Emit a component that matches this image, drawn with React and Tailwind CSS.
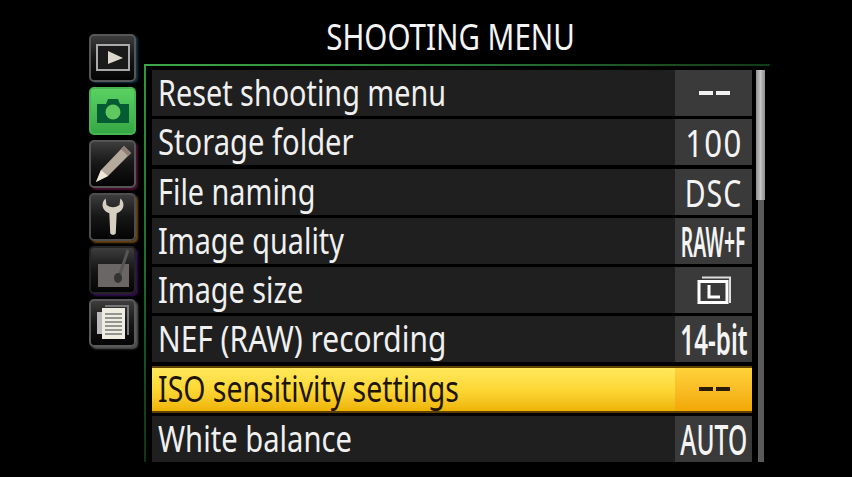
const F = { fontFamily: '"Noto Sans", "Open Sans", sans-serif' };

const rows = [
  ["Reset shooting menu", "--", false, "scale-x-[0.8]"],
  ["Storage folder", "100", false, "scale-x-[0.81]"],
  ["File naming", "DSC", false, "scale-x-[0.8]"],
  ["Image quality", "RAW+F", false, "scale-x-[0.8]"],
  ["Image size", "L", false, "scale-x-[0.8]"],
  ["NEF (RAW) recording", "14-bit", false, "scale-x-[0.83]"],
  ["ISO sensitivity settings", "--", true, "scale-x-[0.79]"],
  ["White balance", "AUTO", false, "scale-x-[0.81]"],
];

const valueClass = {
  "100": "text-[38px] scale-x-[0.82] tracking-[1.5px]",
  DSC: "text-[38px] scale-x-[0.75] tracking-[1.5px]",
  "RAW+F": "text-[42px] scale-x-[0.46] font-semibold",
  "14-bit": "text-[41px] scale-x-[0.59] font-semibold",
  AUTO: "text-[41px] scale-x-[0.6] font-medium",
};

function Value({ v, sel }) {
  if (v === "L")
    return (
      <svg width="36" height="30" viewBox="0 0 36 30">
        <path d="M6 2.5H34V28" fill="none" stroke="#ddd" strokeWidth="2" />
        <rect x="3" y="6.5" width="28" height="21" fill="#3a3a3a" stroke="#fff" strokeWidth="3" />
        <path d="M13 10V22H24" fill="none" stroke="#fff" strokeWidth="3" />
      </svg>
    );
  if (v === "--")
    return (
      <div className="flex gap-[3px] pl-[1px]">
        <div className={`h-[4px] w-[14px] ${sel ? "bg-[#2a1a00]" : "bg-[#f2f2f2]"}`} />
        <div className={`h-[4px] w-[14px] ${sel ? "bg-[#2a1a00]" : "bg-[#f2f2f2]"}`} />
      </div>
    );
  return (
    <span
      className={`block shrink-0 whitespace-nowrap text-center leading-none text-[#f4f4f4] ${valueClass[v]}`}
      style={F}
    >
      {v}
    </span>
  );
}

function Row({ label, value, sel, sx }) {
  return (
    <div className={`flex shrink-0 ${sel ? "h-[47px] border-y-2 border-[#5e4100] bg-gradient-to-b from-[#ffe85a] via-[#fdd835] to-[#eeb400]" : "h-[46px] bg-[#1f1f1f]"}`}>
      <div className="flex min-w-0 flex-1 items-center pl-[6px]">
        <span
          className={`origin-left whitespace-nowrap text-[36px] leading-none ${sx} ${sel ? "text-[#1d1400]" : "text-[#f0f0f0]"}`}
          style={F}
        >
          {label}
        </span>
      </div>
      <div className={`flex w-[77px] shrink-0 items-center justify-center ${sel ? "bg-gradient-to-b from-[#ffd23a] to-[#f2a800]" : "bg-[#3a3a3a]"}`}>
        <Value v={value} sel={sel} />
      </div>
    </div>
  );
}

function Tab({ children, cls, glow, active }) {
  return (
    <div
      className={`flex h-[48px] w-[47px] shrink-0 items-center justify-center rounded-[5px] border-2 ${active ? "border-[#46b552] bg-gradient-to-b from-[#5bd162] to-[#35a845]" : `${cls} bg-gradient-to-b from-[#3d3d3d] via-[#161616] to-[#050505]`}`}
      style={glow}
    >
      {children}
    </div>
  );
}

export default function App() {
  return (
    <div className="flex h-[477px] w-[852px] overflow-hidden bg-black" style={F}>
      <div className="flex w-[144px] shrink-0 flex-col gap-[5px] pl-[89px] pt-[34px]">
        <Tab cls="border-[#565656]" glow={{ boxShadow: "2px 1px 2px #12324a" }}>
          <svg width="36" height="30" viewBox="0 0 36 30">
            <rect x="2" y="2" width="32" height="25" fill="#1a1a1a" stroke="#aaa" strokeWidth="2" />
            <path d="M13 8L28 15L13 21Z" fill="#ddd8cc" />
          </svg>
        </Tab>
        <Tab active>
          <svg width="36" height="28" viewBox="0 0 36 28">
            <path d="M2 7H11L13 2H23L25 7H34V26H2Z" fill="#065c32" />
            <circle cx="18" cy="15" r="7.5" fill="#5fc85f" />
          </svg>
        </Tab>
        <Tab cls="border-[#555]" glow={{ boxShadow: "2px 2px 2px #4a1030" }}>
          <svg width="38" height="40" viewBox="0 0 38 40">
            <path d="M30 2L37 9L14 32L2 38L7 26Z" fill="#b5a99c" />
            <path d="M7 26L14 32L2 38Z" fill="#eee7da" />
            <path d="M30 2L37 9L34 12L27 5Z" fill="#8c8076" />
          </svg>
        </Tab>
        <Tab cls="border-[#4d4d4d]" glow={{ boxShadow: "2px 2px 2px #6b4512" }}>
          <svg width="24" height="42" viewBox="0 0 26 42">
            <path d="M5 1C0 5 0 14 9 17L10 39Q13 42 16 39L17 17C26 14 26 5 21 1L20 8Q13 13 6 8Z" fill="#d6d0c2" />
          </svg>
        </Tab>
        <Tab cls="border-[#242424]" glow={{ boxShadow: "2px 2px 2px #331050" }}>
          <svg width="36" height="42" viewBox="0 0 36 42">
            <rect x="3" y="15" width="31" height="23" fill="#6a6666" />
            <path d="M33 1L24 28" stroke="#555" strokeWidth="3" />
            <ellipse cx="23" cy="29" rx="4" ry="5" fill="#333" />
          </svg>
        </Tab>
        <Tab cls="border-[#5a5a5a]" glow={{ boxShadow: "2px 2px 2px #555" }}>
          <svg width="36" height="38" viewBox="0 0 36 38">
            <path d="M10 2H33V31" fill="none" stroke="#777" strokeWidth="2" />
            <path d="M2 8H8V30H2Z" fill="#bbb" />
            <rect x="7" y="4" width="23" height="31" fill="#efece2" />
            <path d="M10 10H27M10 14H27M10 18H27M10 22H27M10 26H27M10 30H27" stroke="#777" strokeWidth="1.5" />
          </svg>
        </Tab>
      </div>
      <div className="flex w-[626px] shrink-0 flex-col">
        <div className="flex h-[64px] shrink-0 items-center justify-center pr-[12px] pt-[10px] leading-none text-[#f4f4f4]">
          <span className="block shrink-0 scale-x-[0.82] whitespace-nowrap text-[36px] leading-none">SHOOTING MENU</span>
        </div>
        <div className="flex h-[397px] shrink-0 flex-col">
          <div className="h-[2px] shrink-0 bg-gradient-to-r from-[#3fa648] via-[#2c7a35] to-[#123a18]" />
          <div className="flex flex-1">
            <div className="w-[2px] shrink-0 bg-gradient-to-b from-[#2f9a3d] via-[#1f6b2a] to-[#0d3315]" />
            <div className="ml-[6px] mt-[4px] flex w-[600px] shrink-0 flex-col gap-[3.3px]">
              {rows.map((r) => (
                <Row key={r[0]} label={r[0]} value={r[1]} sel={r[2]} sx={r[3]} />
              ))}
            </div>
            <div className="ml-[4px] mt-[4px] flex w-[9px] shrink-0 flex-col items-center">
              <div className="h-[130px] w-[9px] shrink-0 bg-gradient-to-r from-[#8f8f8f] via-[#c4c4c4] to-[#8f8f8f]" />
              <div className="w-[6px] flex-1 bg-[#5a5a5a]" />
            </div>
          </div>
        </div>
      </div>
    </div>
  );
}
